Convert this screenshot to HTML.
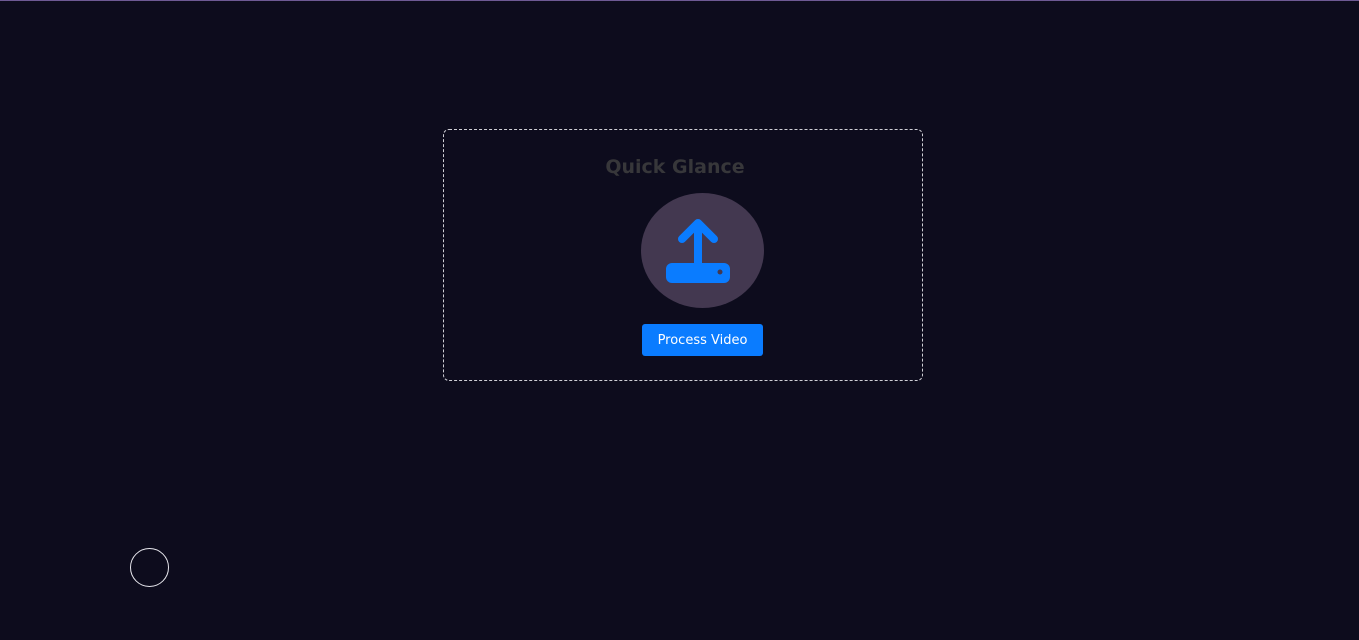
<!DOCTYPE html>
<html><head><style>
html,body{margin:0;padding:0;width:1359px;height:640px;overflow:hidden;background:#0d0c1d;font-family:"DejaVu Sans","Liberation Sans",sans-serif}
.top{position:absolute;left:0;top:0;width:1359px;height:1px;background:#6e5a94}
.box{position:absolute;left:443px;top:129px;width:478px;height:250px;border:1px dashed #cfcfd6;border-radius:6px}
.title{position:absolute;left:443px;width:464px;top:156px;text-align:center;font-weight:bold;font-size:19px;color:#37373a}
.circ{position:absolute;left:641px;top:193px;width:123px;height:115px;border-radius:50%;background:#433850}
.btn{position:absolute;left:642px;top:324px;width:121px;height:32px;background:#0a7cff;border-radius:3px;color:#fff;font-size:13px;line-height:34px;text-align:center}
.ring{position:absolute;left:130px;top:548px;width:37px;height:37px;border:1px solid #e8e8ee;border-radius:50%}
</style></head><body>
<div class="top"></div>
<div class="box"></div>
<div class="title">Quick Glance</div>
<div class="circ"></div>
<svg style="position:absolute;left:0;top:0" width="1359" height="640">
<rect x="666" y="263" width="64" height="20" rx="6" fill="#0a7cff"/>
<path d="M698 266 V224 M682 239 L698 223 L714 239" stroke="#0a7cff" stroke-width="8" fill="none" stroke-linecap="round" stroke-linejoin="round"/>
<circle cx="720" cy="272" r="2.5" fill="#433850"/>
</svg>
<div class="btn">Process Video</div>
<div class="ring"></div>
</body></html>
